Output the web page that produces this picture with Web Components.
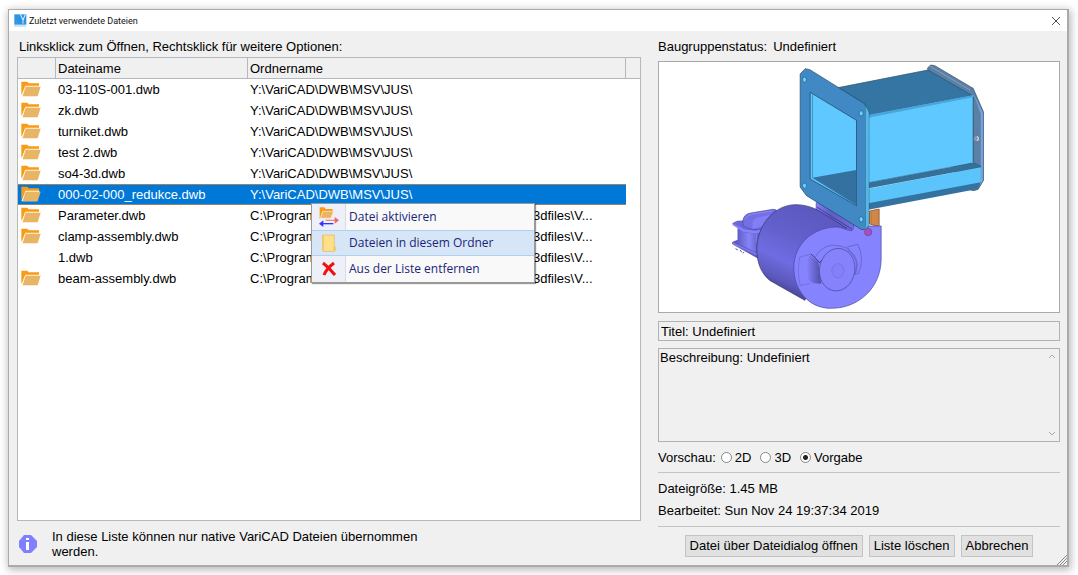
<!DOCTYPE html>
<html lang="de">
<head>
<meta charset="utf-8">
<title>Zuletzt verwendete Dateien</title>
<style>
  html, body { margin: 0; min-height: 100%; }
  body {
    box-sizing: border-box; min-height: 100vh; display: flex; padding: 9px 9px 8px 8px;
    background: #fff; color: #000; font: 13px/16px "Liberation Sans", Arial, sans-serif;
  }
  dialog-window { flex: 1; }
</style>
</head>
<body>
<dialog-window caption="Zuletzt verwendete Dateien">
  <recent-files slot="main"></recent-files>
  <file-details slot="side"></file-details>
</dialog-window>

<script>
class BaseElement extends HTMLElement {
  constructor() {
    super();
    this.attachShadow({ mode: 'open' }).innerHTML = this.render();
  }
}

/* Window frame with caption bar and resize grip */
customElements.define('dialog-window', class extends BaseElement {
  render() {
    return `<style>
      :host { display: flex; flex-direction: column; box-sizing: border-box; min-width: 0; position: relative;
        border: 1px solid #aaa; border-bottom-width: 2px; border-right-width: 2px; background: #f0f0f0; box-shadow: 1px 2px 8px 1px rgba(0,0,0,.28); }
      header { display: flex; align-items: center; gap: 2px; height: 21px; padding: 0 5px; background: #fff; }
      h1 { flex: 1; margin: 0; font: 9px/20px Roboto, "Open Sans", sans-serif; color: #111; }
      button { border: 0; padding: 0; background: none; width: 12px; height: 12px; display: block; }
      svg { display: block; }
      .body { flex: 1; display: grid; grid-template-columns: minmax(0, 1fr) 402px; gap: 17px; padding: 8px 7px 6px 8px; }
      .grip { position: absolute; right: 0; bottom: 0; }
    </style>
    <header>
      <svg width="13" height="13" viewBox="0 0 39 39"><path d="M1 1h36v31H1z" fill="#2d93e3"/><path d="M19 1l8 17 7-17" fill="none" stroke="#e9f6ff" stroke-width="3"/><path d="M27 16v13" stroke="#d8eeff" stroke-width="3"/><path d="M6 20l5 12" stroke="#55a9ea" stroke-width="2"/><path d="M1 36h36" stroke="#63b1ed" stroke-width="3" stroke-dasharray="4 2"/></svg>
      <h1></h1>
      <button aria-label="Schließen"><svg width="12" height="12" viewBox="0 0 12 12"><path d="M2 2l8 8M10 2l-8 8" stroke="#555" fill="none"/></svg></button>
    </header>
    <div class="body"><slot name="main"></slot><slot name="side"></slot></div>
    <svg class="grip" width="11" height="11" viewBox="0 0 11 11"><path d="M1 11L11 1M4 11l7-7M7 11l4-4" stroke="#888" fill="none"/></svg>`;
  }
  connectedCallback() {
    this.shadowRoot.querySelector('h1').textContent = this.getAttribute('caption');
  }
});

customElements.define('folder-icon', class extends BaseElement {
  render() {
    return `<style>:host { display: block; width: 20px; height: 18px; } svg { display: block; }</style>
    <svg width="20" height="16" viewBox="0 0 60 48"><path d="M1 2h18l4 5h31v10H12L3 40H1z" fill="#f99b16"/><path d="M13 14h43L47 46H1z" fill="#fff4df"/><path d="M14 17h45L50 46H5z" fill="#e8b565"/></svg>`;
  }
});

customElements.define('info-icon', class extends BaseElement {
  render() {
    return `<style>:host { display: block; } svg { display: block; }</style>
    <svg width="20" height="20" viewBox="0 0 20 20"><path d="M6 1h7l6 6v6l-6 6H6l-5-6V7z" fill="#7f7fff"/><path d="M8 8h3v8H8zM8 4h3v2H8z" fill="#fff"/></svg>`;
  }
});

customElements.define('menu-entry', class extends BaseElement {
  render() {
    return `<style>
      :host { display: block; }
      button { box-sizing: border-box; width: 100%; height: 26px; display: grid; grid-template-columns: 33px 1fr; align-items: center; gap: 4px;
        padding: 0; border: 1px solid transparent; border-width: 1px 0; background: none; text-align: left; color: #1b2478;
        font: 12px/20px "Open Sans", "Noto Sans", sans-serif; white-space: nowrap; }
      :host([active]) button { background: #d6e6f6; border-color: #b0d0ef; }
      ::slotted(svg) { display: block; justify-self: center; }
    </style>
    <button role="menuitem"><slot name="icon"></slot><span><slot></slot></span></button>`;
  }
});

customElements.define('context-menu', class extends BaseElement {
  render() {
    return `<style>
      :host { display: block; box-sizing: border-box; border: 1px solid #9a9a9a; box-shadow: 1px 1px 1px rgba(0,0,0,.4);
        background: linear-gradient(to right, #edf0f8 33px, #d9dbe2 33px, #d9dbe2 34px, #f9f9f9 34px); }
    </style><div role="menu"><slot></slot></div>`;
  }
});

customElements.define('recent-files', class extends BaseElement {
  render() {
    const jus = 'Y:\\VariCAD\\DWB\\MSV\\JUS\\';
    const prog = '<div class="path"><span>C:\\Program</span><span>3dfiles\\V...</span></div>';
    const files = [['03-110S-001.dwb', jus], ['zk.dwb', jus], ['turniket.dwb', jus], ['test 2.dwb', jus], ['so4-3d.dwb', jus],
      ['000-02-000_redukce.dwb', jus, 'sel'], ['Parameter.dwb', prog], ['clamp-assembly.dwb', prog], ['1.dwb', prog, 'plain'], ['beam-assembly.dwb', prog]];
    const rows = files.map(([name, dir, kind = '']) =>
      `<tr class="${kind}"><td class="ico">${kind === 'plain' ? '' : '<folder-icon></folder-icon>'}</td><td>${name}</td><td>${dir}</td><td class="end"></td></tr>`).join('');
    return `<style>
      :host { display: flex; flex-direction: column; min-width: 0; }
      h2 { margin: 0 0 2px 2px; font: inherit; }
      .list { flex: 1; position: relative; background: #fff; border: 1px solid #b5b8bc; }
      table { width: 100%; table-layout: fixed; border-collapse: separate; border-spacing: 0; }
      th { box-sizing: border-box; height: 21px; padding: 1px 2px 0; text-align: left; font-weight: normal; background: #f0f0f0;
        border-right: 1px solid #b5b8bc; border-bottom: 1px solid #b5b8bc; }
      th:last-child { border-right: 0; }
      td { box-sizing: border-box; height: 21px; padding: 0 2px; white-space: nowrap; overflow: hidden; }
      td.ico { padding: 0 3px; }
      .path { display: grid; grid-template-columns: 283px 1fr; }
      .sel td:not(.end) { background: #0078d7; color: #fff; border-top: 1px solid #a08060; border-bottom: 1px solid #a08060; }
      context-menu { position: absolute; left: 293px; top: 145px; width: 224px; }
      .note { display: flex; align-items: center; gap: 14px; padding: 8px 0 0 1px; }
      p { margin: 0; max-width: 384px; line-height: 15px; }
    </style>
    <h2>Linksklick zum Öffnen, Rechtsklick für weitere Optionen:</h2>
    <div class="list">
      <table>
        <colgroup><col style="width:38px"><col style="width:192px"><col><col style="width:14px"></colgroup>
        <thead><tr><th></th><th>Dateiname</th><th>Ordnername</th><th></th></tr></thead>
        <tbody>${rows}</tbody>
      </table>
      <context-menu>
        <menu-entry><svg slot="icon" width="20" height="20" viewBox="0 0 60 60"><path d="M2 1h14l4 5h21v9H11L4 35H2z" fill="#f99b16"/><path d="M11 13h33l-8 21H4z" fill="#e8b565" stroke="#fff4df" stroke-width="2"/><path d="M20 40h30" stroke="#fb8585" stroke-width="4"/><path d="M47 30l13 10-13 10z" fill="#f76060"/><path d="M12 50h31" stroke="#3434ff" stroke-width="4"/><path d="M13 40L0 50l13 10z" fill="#3434ff"/></svg>Datei aktivieren</menu-entry>
        <menu-entry active><svg slot="icon" width="16" height="18" viewBox="0 0 48 54"><path d="M4 3h36v33l4 4v9l-5 3H6z" fill="#ffe08a" stroke="#dfb760" stroke-width="2"/><path d="M4 3l5 4v44l-5-4z" fill="#f2c963"/><path d="M36 37h7v12h-7z" fill="#f4cc67"/></svg>Dateien in diesem Ordner</menu-entry>
        <menu-entry><svg slot="icon" width="16" height="16" viewBox="0 0 16 16"><path d="M2 2c4 3 8 7 12 12M13 2C9 5 5 9 3 14" stroke="#f01010" stroke-width="3" fill="none"/></svg>Aus der Liste entfernen</menu-entry>
      </context-menu>
    </div>
    <div class="note"><info-icon></info-icon><p>In diese Liste können nur native VariCAD Dateien übernommen werden.</p></div>`;
  }
});

/* Shaded 3D view of the blower assembly */
customElements.define('model-preview', class extends BaseElement {
  render() {
    return `<style>
      :host { display: block; box-sizing: border-box; height: 252px; border: 1px solid #a9a9a9; background: #fff; }
      svg { display: block; width: 100%; height: 100%; }
    </style>
    <svg viewBox="-180 6 1197 750" role="img" aria-label="Vorschau der Baugruppe" stroke-linejoin="round">
      <defs>
        <linearGradient id="drum" gradientUnits="userSpaceOnUse" x1="270" y1="440" x2="150" y2="700"><stop offset="0" stop-color="#5b58c0"/><stop offset=".35" stop-color="#6360cc"/><stop offset=".62" stop-color="#6f6ce2"/><stop offset=".82" stop-color="#5c59bd"/><stop offset="1" stop-color="#37366f"/></linearGradient>
        <linearGradient id="box" x1="0" x2="1"><stop offset="0" stop-color="#605dc8"/><stop offset=".6" stop-color="#8784fa"/><stop offset="1" stop-color="#6a67d5"/></linearGradient>
        <linearGradient id="hub" x1="0" x2="1"><stop offset="0" stop-color="#8683fb"/><stop offset="1" stop-color="#504da9"/></linearGradient>
        <linearGradient id="lip" x1="0" y1="0" x2="1" y2="0"><stop offset="0" stop-color="#8380f8"/><stop offset=".3" stop-color="#5f5cc6"/><stop offset="1" stop-color="#7572e8"/></linearGradient>
      </defs>
      <!-- rear flange and duct -->
      <path d="M624 24l10-9 12 2 108 64 7 4 31 71v205l-16 27-13 4-45-10z" fill="#5c80a5" stroke="#35485d" stroke-width="2"/>
      <path d="M755 83l28 78v208l-12 17 20-24V159z" fill="#78a5dc" stroke="#4d6f97"/>
      <path d="M630 18l122 72" stroke="#7d9fc3" stroke-width="3"/>
      <path d="M350 84l275-54 134 77-311 60z" fill="#3575a4" stroke="#254d68" stroke-width="2"/>
      <path d="M446 166l315-60v202l-315 61z" fill="#5fc8ff"/>
      <path d="M446 165l314-59v6l-314 61z" fill="#4aa5db"/>
      <path d="M446 368l317-60 21 10v4l-338 63z" fill="#357099" stroke="#1f4967" stroke-width="1"/>
      <path d="M446 386l338-64v49l-338 64z" fill="#5bc5fb"/>
      <path d="M446 430l338-63-10 20-328 62z" fill="#3473a1"/>
      <path d="M761 111v195" stroke="#263d51" stroke-width="2"/>
      <circle cx="771" cy="236" r="9" fill="#8099b6" stroke="#465c72"/><path d="M774 229q6 7 0 14" stroke="#fff0dc" stroke-width="3" fill="none"/>
      <path d="M450 453l29-6v53l-29-8z" fill="#d2874a" stroke="#754320" stroke-width="2"/><path d="M456 455v39" stroke="#ad6528"/>
      <!-- motor terminal box -->
      <path d="M48 566l7 4M62 570l5 7M74 576l-4 4" stroke="#55529f" stroke-width="3" fill="none"/>
      <path d="M39 546l16-6 75 10v42l-18 1-16-9-57-32z" fill="#5a57b8" stroke="#413f85" stroke-width="1"/>
      <path d="M39 546l73 34v7l-73-35z" fill="#7976ee"/>
      <path d="M54 505l58 14v59l-58-28z" fill="url(#box)"/><path d="M112 519l24-8v60l-24 7z" fill="#6a67d5"/>
      <path d="M39 490l14-7 20-1 60 18v12l-24 9-38-6z" fill="#6b68d8" stroke="#4a489c" stroke-width="1"/>
      <path d="M39 490l34 18 36 5 26-7v6l-26 9-38-6-32-20z" fill="#8582fb"/>
      <path d="M70 496v-14q3-20 24-23l66-11q12 0 14 6l-34 50-36 5q-22-2-34-13z" fill="#7370e3" stroke="#4c4aa0" stroke-width="2"/>
      <path d="M99 507v-17q2-15 17-18l40-8-22 34z" fill="#817ef6"/>
      <path d="M76 478q7-14 24-16l58-9" fill="none" stroke="#8986fa" stroke-width="3"/>
      <!-- blower housing -->
      <path d="M290 428l20-2 120 72-30 20-110-68z" fill="url(#lip)" stroke="#4c4aa5" stroke-width="2"/>
      <path d="M293 442l105 66" stroke="#403e92" stroke-width="3"/>
      <path d="M230 434C164 433 112 497 112 567c0 45 15 75 40 95l104 59 126-216-81-51q-34-20-71-20z" fill="url(#drum)" stroke="#333265" stroke-width="2"/>
      <path d="M485 498v102c-2 83-66 145-151 145-68 0-111-56-111-122 0-70 55-118 123-122 25-1 32 11 49 11q8-1 7-18l43 4z" fill="#8683ff" stroke="#4644a0" stroke-width="2"/>
      <path d="M275 582l-34 9q-9 43 1 86l30-7" fill="none" stroke="#6a67d2" stroke-width="2"/>
      <path d="M270 584q-17 40-1 78l12 8 24 1-8-64z" fill="url(#hub)"/>
      <path d="M275 582l26 26 12-13" fill="none" stroke="#393876" stroke-width="3"/>
      <path d="M287 591q27-47 79-32l23 8" fill="none" stroke="#5b59bb" stroke-width="2"/>
      <path d="M382 561l33-8q21 42 2 88l-11 2" fill="none" stroke="#5b59bb" stroke-width="2"/>
      <path d="M385 568q40 32 21 75" fill="none" stroke="#6a67d5" stroke-width="5"/>
      <ellipse cx="353" cy="629" rx="53" ry="64" fill="#8582fc" stroke="#494797" stroke-width="2" transform="rotate(10 353 629)"/>
      <ellipse cx="355" cy="632" rx="18" ry="21" fill="#8380fa" stroke="#6f6cdb" stroke-width="2"/>
      <!-- front flange -->
      <path d="M242 42l15-16 14 3 164 102 13 25v342l-10 12-13-2-164-101-19-26z" fill="#4089c4" stroke="#20465f" stroke-width="2"/>
      <path d="M438 137l10 20v339l-9 10z" fill="#54b9e6"/><path d="M438 138v364" stroke="#295c80" stroke-width="1"/>
      <path d="M272 97l139 84v256l-139-80z" fill="#5fc8ff" stroke="#173c59" stroke-width="2"/>
      <path d="M279 353l131-23v105z" fill="#3471a0"/><path d="M279 103v250l130 78" fill="none" stroke="#367ca8" stroke-width="2"/>
      <g fill="#69d0ff" stroke="#245d82" stroke-width="2"><ellipse cx="255" cy="59" rx="6" ry="8"/><ellipse cx="425" cy="160" rx="6" ry="8"/><ellipse cx="255" cy="377" rx="6" ry="8"/><ellipse cx="425" cy="478" rx="6" ry="8"/></g>
      <path d="M433 512l6-7v21z" fill="#d08234"/><circle cx="446" cy="516" r="11" fill="#a052c5" stroke="#744091" stroke-width="2"/>
    </svg>`;
  }
});

customElements.define('radio-choice', class extends BaseElement {
  render() {
    const options = ['2D', '3D', 'Vorgabe'].map((t, i) =>
      `<label><input type="radio" name="mode"${i === 2 ? ' checked' : ''}>${t}</label>`).join('');
    return `<style>
      :host { display: block; }
      div { display: flex; align-items: center; gap: 9px; height: 15px; }
      #cap { margin-right: -4px; }
      label { display: flex; align-items: center; gap: 3px; }
      input { appearance: none; box-sizing: border-box; width: 11px; height: 11px; margin: 0; border: 1px solid #888; border-radius: 50%; background: #fff; }
      input:checked { background: radial-gradient(circle, #222 0 2px, #fff 3px); }
    </style><div role="radiogroup" aria-labelledby="cap"><span id="cap">Vorschau:</span>${options}</div>`;
  }
});

customElements.define('push-button', class extends BaseElement {
  render() {
    return `<style>:host { display: block; }
      button { box-sizing: border-box; height: 22px; padding: 0 4px; border: 1px solid #c4c4c4; background: #e1e1e1; color: #000; font: inherit; white-space: nowrap; }
    </style><button><slot></slot></button>`;
  }
});

customElements.define('file-details', class extends BaseElement {
  render() {
    return `<style>
      :host { display: block; }
      p { margin: 0; }
      .status { display: flex; gap: 6px; }
      model-preview { margin: 6px 0 8px; }
      input, textarea { display: block; box-sizing: border-box; width: 100%; margin: 0; border: 1px solid #b2b2b2; border-radius: 0;
        background: #f0f0f0; color: #000; font: inherit; outline: 0; resize: none; overflow: hidden; }
      input { height: 20px; padding: 0 2px; }
      textarea { height: 94px; padding: 1px; }
      .area { position: relative; margin: 7px 0 8px; }
      .area svg { position: absolute; right: 4px; top: 4px; }
      .area svg + svg { top: auto; bottom: 4px; }
      hr { margin: 7px 0 8px; border: 0; height: 1px; background: #c4c4c4; }
      .date { margin-top: 6px; }
      .actions { display: flex; justify-content: center; gap: 6px; }
    </style>
    <p class="status"><span>Baugruppenstatus:</span><span>Undefiniert</span></p>
    <model-preview></model-preview>
    <input aria-label="Titel" readonly value="Titel: Undefiniert">
    <div class="area">
      <textarea aria-label="Beschreibung" readonly>Beschreibung: Undefiniert</textarea>
      <svg width="9" height="8" viewBox="0 0 9 8"><path d="M2 6l3-3 3 3" fill="none" stroke="#aaa"/></svg>
      <svg width="9" height="8" viewBox="0 0 9 8"><path d="M2 2l3 3 3-3" fill="none" stroke="#aaa"/></svg>
    </div>
    <radio-choice></radio-choice>
    <hr>
    <p>Dateigröße: 1.45 MB</p>
    <p class="date">Bearbeitet: Sun Nov 24 19:37:34 2019</p>
    <hr>
    <div class="actions"><push-button>Datei über Dateidialog öffnen</push-button><push-button>Liste löschen</push-button><push-button>Abbrechen</push-button></div>`;
  }
});
</script>
</body>
</html>
